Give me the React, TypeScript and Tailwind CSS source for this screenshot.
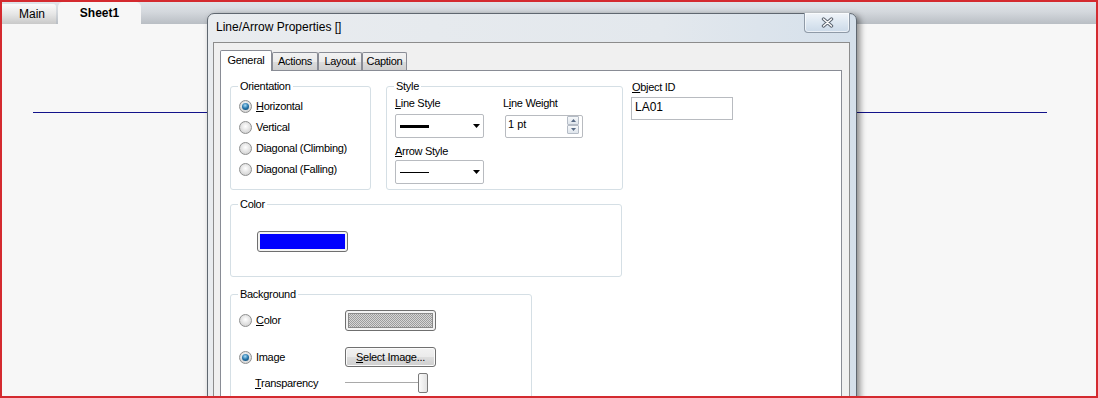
import type { ReactNode } from 'react';

const Radio = ({ checked = false }: { checked?: boolean }) => (
  <span className="flex h-[13px] w-[13px] shrink-0 items-center justify-center rounded-full border border-[#8e8f8f] bg-[radial-gradient(circle_at_50%_40%,#ffffff,#d0d0d0_85%)]">
    {checked && (
      <span className="h-[7px] w-[7px] rounded-full bg-[radial-gradient(circle_at_45%_35%,#a9dcf7,#2474aa_50%,#0b3a5c)]" />
    )}
  </span>
);

const GroupBox = ({ title, className, children }: { title: string; className: string; children?: ReactNode }) => (
  <div className={`relative shrink-0 rounded-[3px] border border-[#d5dfe5] ${className}`}>
    <span className="absolute -top-[7px] left-[7px] bg-white px-[2px] leading-[13px]">{title}</span>
    {children}
  </div>
);

const Combo = ({ thick = false }: { thick?: boolean }) => (
  <div className="flex h-[24px] w-[89px] items-center rounded-[2px] border border-[#b8bbc0] bg-white pl-[4px] pr-[3px]">
    <span className={thick ? 'h-[3px] w-[29px] bg-black' : 'h-px w-[29px] bg-black'} />
    <svg className="ml-auto" width="7" height="4" viewBox="0 0 7 4">
      <path d="M0 0h7L3.5 4z" fill="#000" />
    </svg>
  </div>
);

const SpinBtn = ({ up = false }: { up?: boolean }) => (
  <div className="flex h-[9px] w-[12px] items-center justify-center rounded-[1px] border border-[#b5bcc6] bg-[linear-gradient(#f6f8fa,#dfe5ec)]">
    <svg width="5" height="3" viewBox="0 0 5 3">
      <path d={up ? 'M0 3L2.5 0L5 3z' : 'M0 0h5L2.5 3z'} fill="#596b85" />
    </svg>
  </div>
);

const Frame = ({ children }: { children: ReactNode }) => (
  <div className="h-[21px] w-[91px] rounded-[3px] border border-[#6f6f6f] bg-[#f3f3f3] p-[2px]">{children}</div>
);

const U = ({ children }: { children: ReactNode }) => <span className="underline underline-offset-[1px]">{children}</span>;

const tabIdle =
  'flex h-[18px] items-center justify-center rounded-t-[2px] border border-b-0 border-[#898c95] bg-[linear-gradient(#f2f2f2,#ebebeb_50%,#dddddd_50%,#cfcfcf)]';

export default function App() {
  return (
    <div className="relative flex h-[398px] w-[1098px] flex-col overflow-hidden border-2 border-[#d42a2f] bg-[#f7f7f7] font-['Liberation_Sans',Arial,sans-serif] text-black">
      {/* sheet tabs */}
      <div className="flex h-[22px] shrink-0 items-end bg-[linear-gradient(#e0e4e9,#d4d8dd_45%,#b9bec4)] text-[12px]">
        <div className="flex h-[20px] w-[54px] items-center rounded-tr-[3px] bg-[linear-gradient(#fbfbfb,#e6e6e6_50%,#c9c9c9)] pl-[17px]">
          Main
        </div>
        <div className="ml-[2px] flex h-[22px] w-[83px] items-center justify-center rounded-t-[5px] bg-[#f7f7f7] font-bold">
          Sheet1
        </div>
      </div>

      {/* line object on the sheet */}
      <div className="absolute left-[31px] top-[110px] h-px w-[1014px] bg-[#12128a]" />

      {/* dialog window */}
      <div className="absolute left-[205px] top-[11px] flex h-[400px] w-[650px] flex-col rounded-t-[7px] border border-[#5f6770] bg-[linear-gradient(90deg,#e9ecef,#e3e8ed_70%,#d5e0eb)] shadow-[3px_2px_6px_rgba(0,0,0,0.45)]">
        <div className="flex h-[28px] shrink-0 items-start justify-between pl-[8px] pr-[6px]">
          <span className="mt-[6px] text-[12px] leading-[14px]">Line/Arrow Properties []</span>
          <div className="-mt-px flex h-[20px] w-[46px] items-center justify-center rounded-b-[4px] border border-t-0 border-[#8f9aa7] bg-[linear-gradient(#f1f5f9,#dde7f1_50%,#cbd9e8)] shadow-[inset_0_0_0_1px_rgba(255,255,255,0.6)]">
            <svg width="13" height="11" viewBox="0 0 13 11">
              <path d="M2.5 2l8 7M10.5 2l-8 7" stroke="#5b6470" strokeWidth="3.4" strokeLinecap="round" />
              <path d="M2.5 2l8 7M10.5 2l-8 7" stroke="#ffffff" strokeWidth="1.4" strokeLinecap="round" />
            </svg>
          </div>
        </div>

        <div className="ml-[5px] mr-[6px] flex flex-1 flex-col border border-[#8c8c8c] bg-[#f0f0f0] pl-[6px] pr-[7px] pt-[7px] text-[11px] tracking-[-0.3px]">
          {/* tabs */}
          <div className="flex h-[20px] shrink-0 items-end">
            <div className="relative z-10 -mb-px flex h-[21px] w-[52px] items-center justify-center rounded-t-[2px] border border-b-0 border-[#898c95] bg-white pb-[2px]">
              General
            </div>
            <div className={`${tabIdle} w-[46px]`}>Actions</div>
            <div className={`${tabIdle} w-[44px]`}>Layout</div>
            <div className={`${tabIdle} w-[45px]`}>Caption</div>
          </div>

          <div className="flex flex-1 flex-col border border-[#898c95] bg-white pl-[9px] pt-[15px]">
            <div className="flex items-start">
              <GroupBox title="Orientation" className="h-[104px] w-[141px]">
                <div className="flex flex-col pl-[8px] pt-[9px]">
                  {[
                    { label: <><U>H</U>orizontal</>, checked: true },
                    { label: <>Vertical</> },
                    { label: <>Diagonal (Climbing)</> },
                    { label: <>Diagonal (Falling)</> },
                  ].map((r, i) => (
                    <div key={i} className="flex h-[21px] items-center gap-[4px]">
                      <Radio checked={r.checked} />
                      <span>{r.label}</span>
                    </div>
                  ))}
                </div>
              </GroupBox>

              <GroupBox title="Style" className="ml-[15px] h-[104px] w-[237px]">
                <div className="flex pl-[8px] pt-[10px]">
                  <div className="flex flex-col">
                    <span className="leading-[13px]">
                      <U>L</U>ine Style
                    </span>
                    <div className="mt-[4px]">
                      <Combo thick />
                    </div>
                    <span className="mt-[7px] leading-[13px]">
                      <U>A</U>rrow Style
                    </span>
                    <div className="mt-[2px]">
                      <Combo />
                    </div>
                  </div>
                  <div className="ml-[21px] flex flex-col">
                    <span className="-ml-[2px] leading-[13px]">
                      L<U>i</U>ne Weight
                    </span>
                    <div className="mt-[5px] flex h-[23px] w-[78px] items-start rounded-[2px] border border-[#b8bbc0] bg-white pl-[2px] pr-[3px] tracking-normal">
                      <span className="mt-[2px] leading-[13px]">1 pt</span>
                      <div className="ml-auto flex flex-col">
                        <SpinBtn up />
                        <SpinBtn />
                      </div>
                    </div>
                  </div>
                </div>
              </GroupBox>

              <div className="-mt-[5px] ml-[8px] flex flex-col">
                <span className="pl-px leading-[13px]">
                  <U>O</U>bject ID
                </span>
                <div className="mt-[3px] h-[23px] w-[102px] border border-[#b8bbc0] bg-white pl-[3px] pt-[2px] text-[12px] leading-[15px] tracking-normal">
                  LA01
                </div>
              </div>
            </div>

            <GroupBox title="Color" className="mt-[14px] h-[73px] w-[392px]">
              <div className="pl-[26px] pt-[26px]">
                <Frame>
                  <div className="h-full w-full bg-[#0000fe]" />
                </Frame>
              </div>
            </GroupBox>

            <GroupBox title="Background" className="mt-[17px] h-[120px] w-[302px]">
              <div className="flex flex-col pl-[8px] pt-[15px]">
                <div className="grid h-[20px] grid-cols-[106px_91px] items-center">
                  <div className="flex items-center gap-[4px]">
                    <Radio />
                    <span>
                      <U>C</U>olor
                    </span>
                  </div>
                  <Frame>
                    <div className="h-full w-full border border-[#8a8a8a] bg-[repeating-conic-gradient(#9c9c9c_0_25%,#d6d6d6_0_50%)] bg-[length:2px_2px]" />
                  </Frame>
                </div>
                <div className="mt-[17px] grid h-[20px] grid-cols-[106px_91px] items-center">
                  <div className="flex items-center gap-[4px]">
                    <Radio checked />
                    <span>Image</span>
                  </div>
                  <div className="flex h-[20px] items-center justify-center rounded-[3px] border border-[#707070] bg-[linear-gradient(#f2f2f2,#ebebeb_48%,#dddddd_52%,#cfcfcf)] shadow-[inset_0_0_0_1px_#fbfbfb]">
                    <span>
                      <U>S</U>elect Image...
                    </span>
                  </div>
                </div>
                <div className="mt-[6px] grid h-[20px] grid-cols-[106px_91px] items-center">
                  <span className="pl-[16px]">
                    <U>T</U>ransparency
                  </span>
                  <div className="flex h-[20px] w-[83px] items-center">
                    <div className="h-[3px] flex-1 border-t border-[#a9a9a9] bg-white" />
                    <div className="-ml-[2px] h-[20px] w-[10px] rounded-[2px] border border-[#7a7a7a] bg-[linear-gradient(90deg,#fbfbfb,#e2e2e2)]" />
                  </div>
                </div>
              </div>
            </GroupBox>
          </div>
        </div>
      </div>
    </div>
  );
}
